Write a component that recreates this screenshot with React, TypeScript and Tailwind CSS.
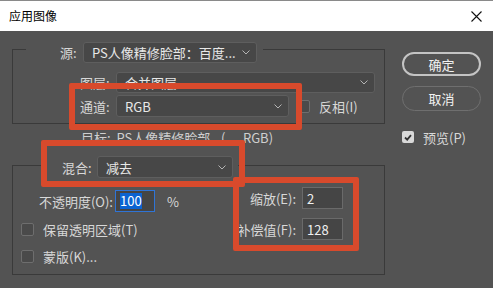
import React from 'react';

const LINE = 'border-[#3a3a3a]';

const Chevron = () => (
  <svg width="8" height="5" viewBox="0 0 8 5" className="shrink-0">
    <path d="M0.5 0.5 L4 4 L7.5 0.5" fill="none" stroke="#b4b4b4" strokeWidth="1" />
  </svg>
);

const Dropdown: React.FC<{ text: string; w: string; h?: string }> = ({ text, w, h = 'h-[21px]' }) => (
  <div className={`${w} ${h} flex items-center justify-between rounded-[3px] border border-[#5e5e5e] bg-[#474747] pl-[8px] pr-[6px] text-[#e8e8e8]`}>
    <span className="whitespace-nowrap leading-none">{text}</span>
    <Chevron />
  </div>
);

const Box: React.FC<{ checked?: boolean }> = ({ checked }) =>
  checked ? (
    <div className="flex h-[12px] w-[12px] items-center justify-center rounded-[2px] bg-[#d9d9d9]">
      <svg width="8" height="7" viewBox="0 0 8 7">
        <path d="M1 3.5 L3.2 5.6 L7 1.2" fill="none" stroke="#333" strokeWidth="1.8" />
      </svg>
    </div>
  ) : (
    <div className="h-[13px] w-[13px] rounded-[2px] border-[1.5px] border-[#6e6e6e] bg-[#4a4a4a]" />
  );

const NumInput: React.FC<{ value: string }> = ({ value }) => (
  <div className="ml-[6px] flex h-[22px] w-[41px] items-center border border-[#6a6a6a] bg-[#454545] pl-[4px] leading-none text-[#f0f0f0]">
    {value}
  </div>
);

const App: React.FC = () => {
  return (
    <div
      className="relative h-[288px] w-[493px] overflow-hidden whitespace-nowrap bg-[#535353] text-[13px] text-[#d8d8d8]"
      style={{ fontFamily: "'Noto Sans CJK SC', 'Noto Sans', sans-serif" }}
    >
      {/* title bar */}
      <div className="flex h-[31px] items-center justify-between border-t border-[#8a8a8a] bg-white pl-[9px] pr-[11px]">
        <span className="text-[12px] leading-none text-black">应用图像</span>
        <svg width="11" height="11" viewBox="0 0 11 11">
          <path d="M0.5 0.5 L10.5 10.5 M10.5 0.5 L0.5 10.5" stroke="#111" strokeWidth="1.1" />
        </svg>
      </div>

      <div className="flex">
        {/* left side */}
        <div className="flex w-[385px] flex-col">
          {/* source group */}
          <div className={`ml-[12px] mt-[18px] h-[75px] border-x border-b ${LINE}`}>
            <div className="-mt-[7px] flex h-[21px]">
              <div className={`mt-[7px] h-0 w-[13px] self-start border-t ${LINE}`} />
              <div className="flex items-center pl-[34px] pr-[6px]">
                <span className="w-[17px] leading-none">源:</span>
                <div className="ml-[6px]">
                  <Dropdown text="PS人像精修脸部：百度..." w="w-[174px]" />
                </div>
              </div>
              <div className={`mt-[7px] h-0 flex-1 self-start border-t ${LINE}`} />
            </div>

            <div className="mt-[9px] flex h-[21px] items-center pl-[67px]">
              <span className="w-[36px] leading-none">图层:</span>
              <Dropdown text="合并图层" w="w-[259px]" />
            </div>

            <div className="mt-[2px] flex h-[22px] items-center pl-[67px]">
              <span className="w-[36px] leading-none">通道:</span>
              <Dropdown text="RGB" w="w-[173px]" h="h-[22px]" />
              <div className="ml-[8px]">
                <Box />
              </div>
              <span className="ml-[9px] leading-none">反相(I)</span>
            </div>
          </div>

          {/* target */}
          <div className="mt-[5px] flex h-[16px] items-center pl-[81px] leading-none text-[#cfcfcf]">
            目标:&nbsp; PS人像精修脸部...(..., RGB)
          </div>

          {/* blend group */}
          <div className={`ml-[12px] mt-[20px] h-[110px] border-x border-b ${LINE}`}>
            <div className="-mt-[9px] flex h-[22px]">
              <div className={`mt-[9px] h-0 w-[32px] self-start border-t ${LINE}`} />
              <div className="flex items-center pl-[17px] pr-[5px]">
                <span className="w-[30px] leading-none">混合:</span>
                <div className="ml-[5px]">
                  <Dropdown text="减去" w="w-[136px]" h="h-[22px]" />
                </div>
              </div>
              <div className={`mt-[9px] h-0 flex-1 self-start border-t ${LINE}`} />
            </div>

            <div className="flex">
              <div className="mt-[12px] flex w-[210px] flex-col">
                <div className="flex h-[22px] items-center">
                  <span className="w-[100px] text-right leading-none">不透明度(O):</span>
                  <div className="ml-[2px] flex h-[22px] w-[40px] items-center border border-[#2f74d6] bg-[#454545] pl-[4px]">
                    <span className="bg-[#0b63d1] leading-[16px] text-white">100</span>
                  </div>
                  <span className="ml-[12px] leading-none">%</span>
                </div>
                <div className="mt-[7px] flex h-[20px] items-center pl-[8px]">
                  <Box />
                  <span className="ml-[9px] leading-none">保留透明区域(T)</span>
                </div>
                <div className="mt-[7px] flex h-[20px] items-center pl-[8px]">
                  <Box />
                  <span className="ml-[9px] leading-none">蒙版(K)...</span>
                </div>
              </div>

              <div className="mt-[9px] flex flex-col">
                <div className="flex h-[22px] items-center">
                  <span className="w-[73px] text-right leading-none">缩放(E):</span>
                  <NumInput value="2" />
                </div>
                <div className="mt-[9px] flex h-[22px] items-center">
                  <span className="w-[73px] text-right leading-none">补偿值(F):</span>
                  <NumInput value="128" />
                </div>
              </div>
            </div>
          </div>
        </div>

        {/* right side */}
        <div className="ml-[17px] mt-[21px] flex flex-col">
          <button className="flex h-[24px] w-[79px] items-center justify-center rounded-full border-2 border-[#c4c4c4] leading-none text-[#f2f2f2]">
            确定
          </button>
          <button className="mt-[10px] flex h-[25px] w-[79px] items-center justify-center rounded-full border-[1.5px] border-[#6f6f6f] leading-none text-[#f2f2f2]">
            取消
          </button>
          <div className="mt-[18px] flex h-[16px] items-center">
            <Box checked />
            <span className="ml-[9px] leading-none">预览(P)</span>
          </div>
        </div>
      </div>

      {/* red annotation frames */}
      <div className="pointer-events-none absolute left-[69px] top-[83px] h-[47px] w-[233px] rounded-[2px] border-[6px] border-[#d84a2c]" />
      <div className="pointer-events-none absolute left-[41px] top-[140px] h-[47px] w-[204px] rounded-[2px] border-[6px] border-[#d84a2c]" />
      <div className="pointer-events-none absolute left-[233px] top-[177px] h-[74px] w-[126px] rounded-[2px] border-[6px] border-[#d84a2c]" />
    </div>
  );
};

export default App;
